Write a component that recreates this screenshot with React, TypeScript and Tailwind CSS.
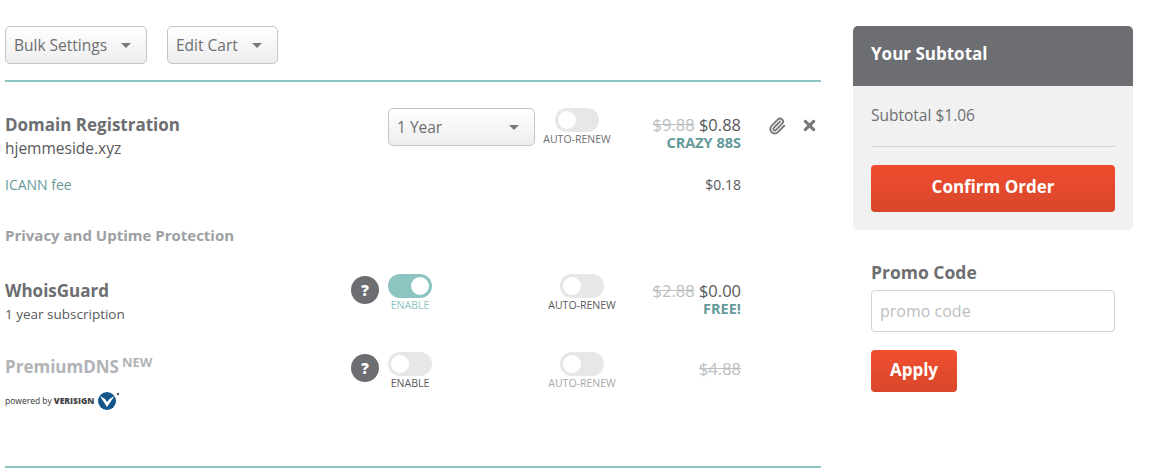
import { FaTimes } from "react-icons/fa";
import { Paperclip } from "lucide-react";

function Caret() {
  return <span className="w-0 h-0 border-x-[5px] border-x-transparent border-t-[5px] border-t-[#77787b]" />;
}

function Drop({ label, width }: { label: string; width: string }) {
  return (
    <div className={`${width} h-[38px] flex items-center justify-between pl-[8px] pr-[15px] rounded-[5px] border border-[#c4c5c6] bg-gradient-to-b from-white to-[#ededed] text-[15.5px] text-[#6d6e71]`}>
      <span className="pt-[2px]">{label}</span>
      <Caret />
    </div>
  );
}

function Toggle({ on, label, labelClass, width }: { on?: boolean; label: string; labelClass: string; width: string }) {
  return (
    <div className={`${width} flex flex-col items-center`}>
      <div className={`w-[44px] h-[24px] rounded-full flex items-center px-[3px] ${on ? "bg-[#8cc4c2] justify-end" : "bg-[#e6e7e8] justify-start"}`}>
        <span className="w-[18px] h-[18px] rounded-full bg-white" />
      </div>
      <span className={`text-[10.5px] leading-[12px] mt-[1px] whitespace-nowrap ${labelClass}`}>{label}</span>
    </div>
  );
}

function Help() {
  return (
    <div className="w-[28px] h-[28px] rounded-full bg-[#6d6e71] text-white text-[15px] font-extrabold flex items-center justify-center">?</div>
  );
}

function Verisign() {
  return (
    <svg width="26" height="20" viewBox="0 0 26 20" className="ml-[3px]">
      <circle cx="10" cy="10" r="9" fill="#14568a" />
      <path d="M3 5 L10 16 L17.5 5 L12.5 8 L10 11 L8 8 Z" fill="#fff" />
      <circle cx="21" cy="3" r="1.2" fill="#555" />
    </svg>
  );
}

export default function App() {
  return (
    <div className="w-[1149px] h-[475px] bg-white overflow-hidden flex pt-[26px] pl-[5px] font-['Open_Sans','Lato',sans-serif]">
      <div className="w-[816px]">
        <div className="flex gap-[20px]">
          <Drop label="Bulk Settings" width="w-[142px]" />
          <Drop label="Edit Cart" width="w-[111px]" />
        </div>
        <div className="h-[2px] bg-[#8cc4c2] mt-[16px]" />

        <div className="flex mt-[26px] h-[60px]">
          <div className="w-[383px] pt-[6px]">
            <div className="text-[17px] leading-[22px] font-bold text-[#6d6e71]">Domain Registration</div>
            <div className="text-[15.5px] leading-[20px] mt-[2px] text-[#58595b]">hjemmeside.xyz</div>
          </div>
          <Drop label="1 Year" width="w-[147px]" />
          <Toggle label="AUTO-RENEW" labelClass="text-[#6d6e71]" width="w-[84px]" />
          <div className="w-[122px] text-right pt-[7px]">
            <div className="text-[16.5px] leading-[20px] whitespace-nowrap">
              <span className="line-through text-[#bcbec0]">$9.88</span> <span className="text-[#58595b]">$0.88</span>
            </div>
            <div className="text-[14.5px] leading-[16px] font-bold text-[#659a9a]">CRAZY 88S</div>
          </div>
          <div className="flex items-start gap-[15px] ml-[27px] pt-[9px] text-[#77787b]">
            <Paperclip className="w-[18px] h-[18px]" strokeWidth={2.5} />
            <FaTimes className="w-[17px] h-[17px]" />
          </div>
        </div>

        <div className="flex justify-between w-[736px] mt-[8px] text-[14px] leading-[18px]">
          <span className="text-[#659a9a]">ICANN fee</span>
          <span className="text-[#58595b]">$0.18</span>
        </div>

        <div className="mt-[31px] text-[15px] leading-[20px] font-bold text-[#9d9fa2]">Privacy and Uptime Protection</div>

        <div className="flex mt-[29px] h-[78px]">
          <div className="w-[346px] pt-[6px]">
            <div className="text-[17px] leading-[22px] font-bold text-[#6d6e71]">WhoisGuard</div>
            <div className="text-[13.5px] leading-[18px] mt-[3px] text-[#58595b]">1 year subscription</div>
          </div>
          <div className="w-[37px] pt-[2px]"><Help /></div>
          <Toggle on label="ENABLE" labelClass="text-[#8cc4c2]" width="w-[44px]" />
          <Toggle label="AUTO-RENEW" labelClass="text-[#58595b]" width="w-[68px] ml-[116px]" />
          <div className="w-[125px] text-right pt-[7px]">
            <div className="text-[16.5px] leading-[20px] whitespace-nowrap">
              <span className="line-through text-[#bcbec0]">$2.88</span> <span className="text-[#58595b]">$0.00</span>
            </div>
            <div className="text-[14.5px] leading-[16px] font-bold text-[#659a9a]">FREE!</div>
          </div>
        </div>

        <div className="flex h-[112px]">
          <div className="w-[346px]">
            <div className="flex items-start h-[26px] pt-[3px]">
              <span className="text-[17px] leading-[24px] font-bold text-[#b1b3b6]">PremiumDNS</span>
              <span className="ml-[3px] mt-[1px] text-[13px] leading-[12px] font-bold text-[#b1b3b6]">NEW</span>
            </div>
            <div className="flex items-center mt-[13px] h-[20px]">
              <span className="text-[8.5px] text-[#333] whitespace-nowrap">powered by</span>
              <span className="ml-[2px] text-[8.5px] font-extrabold text-[#444]">VERISIGN</span>
              <Verisign />
            </div>
          </div>
          <div className="w-[37px] pt-[2px]"><Help /></div>
          <Toggle label="ENABLE" labelClass="text-[#58595b]" width="w-[44px]" />
          <Toggle label="AUTO-RENEW" labelClass="text-[#a7a9ac]" width="w-[68px] ml-[116px]" />
          <div className="w-[125px] text-right pt-[7px] text-[16.5px] leading-[20px]">
            <span className="line-through text-[#bcbec0]">$4.88</span>
          </div>
        </div>

        <div className="h-[2px] bg-[#8cc4c2] mt-[2px]" />
      </div>

      <div className="w-[280px] ml-[32px]">
        <div className="rounded-[5px] bg-[#f1f1f1] overflow-hidden h-[204px]">
          <div className="h-[60px] bg-[#6d6e71] px-[18px] pb-[4px] flex items-center text-white text-[17px] font-bold">Your Subtotal</div>
          <div className="px-[18px]">
            <div className="h-[61px] border-b border-[#d4d4d4] pt-[19px] text-[15.5px] leading-[20px] text-[#6d6e71]">Subtotal $1.06</div>
            <div className="mt-[18px] h-[47px] pb-[3px] rounded-[4px] bg-gradient-to-b from-[#ee4c2e] to-[#d9472b] text-white text-[17px] font-bold flex items-center justify-center">Confirm Order</div>
          </div>
        </div>
        <div className="px-[18px]">
          <div className="mt-[31px] text-[17.5px] leading-[22px] font-bold text-[#6d6e71]">Promo Code</div>
          <div className="mt-[7px] h-[42px] border border-[#d1d3d4] rounded-[4px] flex items-center px-[8px] text-[16px] text-[#bcbec0]">promo code</div>
          <div className="mt-[18px] w-[86px] h-[42px] pb-[2px] rounded-[4px] bg-gradient-to-b from-[#f04e2f] to-[#d9472b] text-white text-[17px] font-bold flex items-center justify-center">Apply</div>
        </div>
      </div>
    </div>
  );
}
